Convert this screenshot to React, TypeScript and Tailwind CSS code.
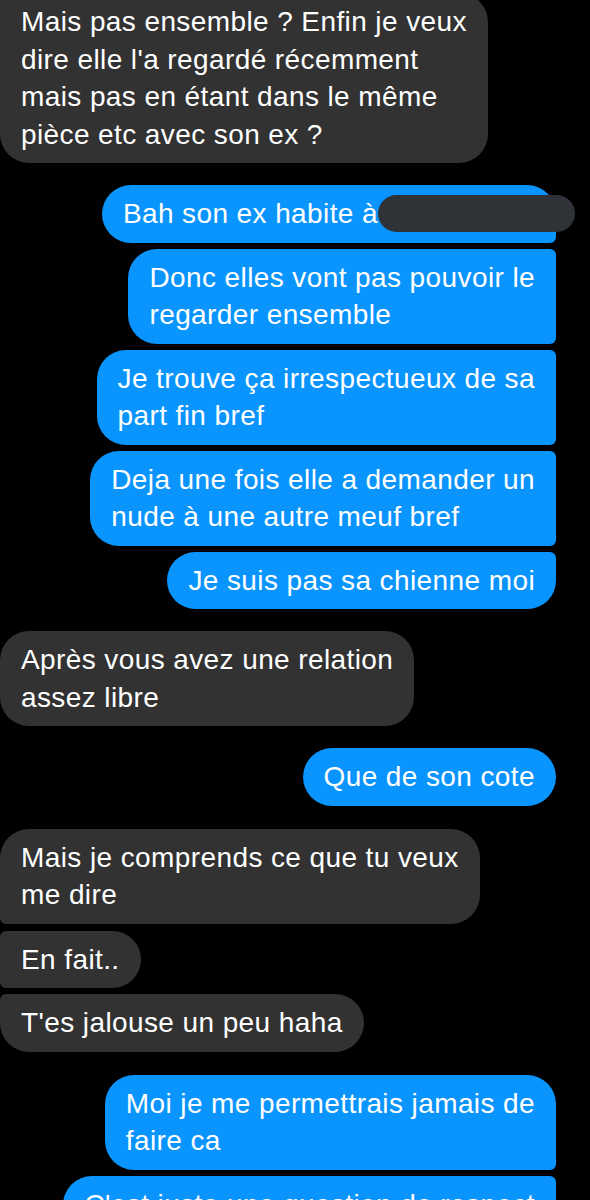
import React from "react";

type Pos = "single" | "first" | "middle" | "last";
type Msg = { me: boolean; lines: string[]; pos: Pos; gapTop: number; redact?: boolean };

const msgs: Msg[] = [
  { me: false, pos: "last", gapTop: 0, lines: ["Mais pas ensemble ? Enfin je veux", "dire elle l'a regardé récemment", "mais pas en étant dans le même", "pièce etc avec son ex ?"] },
  { me: true, pos: "first", gapTop: 22, lines: ["Bah son ex habite à"], redact: true },
  { me: true, pos: "middle", gapTop: 6, lines: ["Donc elles vont pas pouvoir le", "regarder ensemble"] },
  { me: true, pos: "middle", gapTop: 6, lines: ["Je trouve ça irrespectueux de sa", "part fin bref"] },
  { me: true, pos: "middle", gapTop: 6, lines: ["Deja une fois elle a demander un", "nude à une autre meuf bref"] },
  { me: true, pos: "last", gapTop: 6, lines: ["Je suis pas sa chienne moi"] },
  { me: false, pos: "single", gapTop: 22, lines: ["Après vous avez une relation", "assez libre"] },
  { me: true, pos: "single", gapTop: 22, lines: ["Que de son cote"] },
  { me: false, pos: "first", gapTop: 23, lines: ["Mais je comprends ce que tu veux", "me dire"] },
  { me: false, pos: "middle", gapTop: 7, lines: ["En fait.."] },
  { me: false, pos: "last", gapTop: 6, lines: ["T'es jalouse un peu haha"] },
  { me: true, pos: "first", gapTop: 23, lines: ["Moi je me permettrais jamais de", "faire ca"] },
  { me: true, pos: "last", gapTop: 6, lines: ["C'est juste une question de respect", "quoi"] },
];

function radiusClass(me: boolean, pos: Pos): string {
  if (me) {
    if (pos === "single") return "rounded-[29px]";
    if (pos === "first") return "rounded-tl-[29px] rounded-bl-[29px] rounded-tr-[29px] rounded-br-[6px]";
    if (pos === "middle") return "rounded-tl-[29px] rounded-bl-[29px] rounded-tr-[6px] rounded-br-[6px]";
    return "rounded-tl-[29px] rounded-bl-[29px] rounded-tr-[6px] rounded-br-[29px]";
  }
  if (pos === "single") return "rounded-[29px]";
  if (pos === "first") return "rounded-tr-[29px] rounded-br-[29px] rounded-tl-[29px] rounded-bl-[6px]";
  if (pos === "middle") return "rounded-tr-[29px] rounded-br-[29px] rounded-tl-[6px] rounded-bl-[6px]";
  return "rounded-tr-[29px] rounded-br-[29px] rounded-tl-[6px] rounded-bl-[29px]";
}

function Bubble({ m }: { m: Msg }) {
  return (
    <div
      className={`flex ${m.me ? "justify-end pr-[34px]" : "justify-start pl-0"}`}
      style={{ marginTop: m.gapTop }}
    >
      <div
        className={`px-[21px] py-[10px] text-white ${m.me ? "bg-[#0a94fd]" : "bg-[#323232]"} ${radiusClass(m.me, m.pos)}`}
      >
        {m.redact ? (
          <div className="flex items-center whitespace-nowrap leading-[37.5px]">
            <span>{m.lines[0]}</span>
            <span className="ml-0 mr-[-40px] h-[37px] w-[197px] shrink-0 rounded-[19px] bg-[#2f3337]" />
          </div>
        ) : (
          m.lines.map((l, i) => (
            <div key={i} className="whitespace-nowrap leading-[37.5px]">
              {l}
            </div>
          ))
        )}
      </div>
    </div>
  );
}

export default function App() {
  return (
    <div
      className="h-[1200px] w-[590px] overflow-hidden bg-black text-[28px] tracking-[0.4px]"
      style={{ fontFamily: '"Liberation Sans", Arial, sans-serif' }}
    >
      <div className="-mt-[7px] flex flex-col">
        {msgs.map((m, i) => (
          <Bubble key={i} m={m} />
        ))}
      </div>
    </div>
  );
}
